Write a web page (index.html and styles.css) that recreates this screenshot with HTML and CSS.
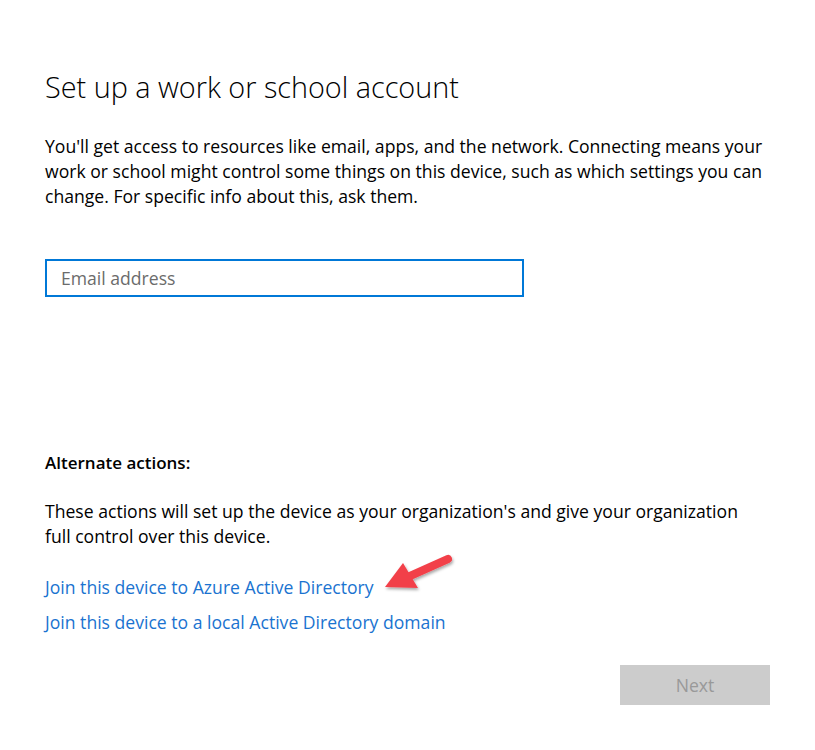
FILE: index.html
```html
<!DOCTYPE html>
<html lang="en">
<head>
    <meta charset="UTF-8">
    <meta name="viewport" content="width=device-width, initial-scale=1.0">
    <title>Set up a work or school account</title>
    <link rel="stylesheet" href="styles.css">
</head>
<body>
    <div class="page">
        <h1>Set up a work or school account</h1>
        <p class="intro">You'll get access to resources like email, apps, and the network. Connecting means your work or school might control some things on this device, such as which settings you can change. For specific info about this, ask them.</p>

        <div class="field">
            <input class="email" type="text" placeholder="Email address">
        </div>

        <h3 class="alt-title">Alternate actions:</h3>
        <p class="alt-text">These actions will set up the device as your organization's and give your organization full control over this device.</p>

        <div class="links">
            <a href="#" class="azure">Join this device to Azure Active Directory</a>
            <a href="#">Join this device to a local Active Directory domain</a>
        </div>

        <div class="footer">
            <button class="next" disabled>Next</button>
        </div>

        <svg class="arrow" width="100" height="70" viewBox="0 0 100 70">
            <defs>
                <filter id="shadow" x="-20%" y="-20%" width="150%" height="150%">
                    <feDropShadow dx="1" dy="2" stdDeviation="1.5" flood-color="#000" flood-opacity="0.35"/>
                </filter>
            </defs>
            <g filter="url(#shadow)">
                <line x1="78" y1="19" x2="40" y2="36" stroke="#f2414a" stroke-width="8" stroke-linecap="round"/>
                <polygon points="15,47 33,23 48,48" fill="#f2414a"/>
            </g>
        </svg>
    </div>
</body>
</html>
```

FILE: styles.css
```css
body {
    margin: 0;
    background: #fff;
    font-family: "Open Sans", sans-serif;
    color: #000;
}

.page {
    position: relative;
    padding: 67px 0 0 45px;
    width: 720px;
}

h1 {
    margin: 0;
    font-size: 28.8px;
    font-weight: 300;
    line-height: 40px;
}

.intro {
    margin: 27px 0 0;
    font-size: 17.6px;
    line-height: 25px;
}

.field {
    margin-top: 50px;
}

.email {
    box-sizing: border-box;
    width: 479px;
    height: 38px;
    border: 2px solid #0078d7;
    padding: 0 14px;
    font-family: inherit;
    font-size: 17.6px;
    color: #000;
    outline: none;
}
.email::placeholder {
    color: #6b6b6b;
}

.alt-title {
    margin: 153px 0 0;
    font-size: 17px;
    font-weight: 600;
    line-height: 25px;
}

.alt-text {
    margin: 24px 0 0;
    font-size: 17.6px;
    line-height: 25px;
}

.links {
    display: flex;
    flex-direction: column;
    gap: 10px;
    margin-top: 26px;
}
.links a {
    color: #1a73d0;
    text-decoration: none;
    font-size: 17.6px;
    line-height: 25px;
    align-self: flex-start;
}

.footer {
    display: flex;
    justify-content: flex-end;
    margin-top: 30px;
    width: 725px;
}

.next {
    width: 150px;
    height: 40px;
    border: none;
    background: #cccccc;
    color: #999999;
    font-family: inherit;
    font-size: 17.6px;
}

.arrow {
    position: absolute;
    left: 370px;
    top: 540px;
}
```
